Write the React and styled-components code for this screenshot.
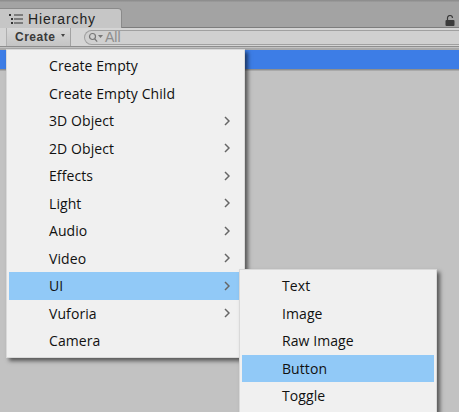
import styled, { createGlobalStyle } from "styled-components";

const GlobalStyle = createGlobalStyle`
  html, body {
    margin: 0;
    padding: 0;
    background: #c2c2c2;
  }
`;

const Window = styled.div`
  position: relative;
  width: 459px;
  height: 412px;
  overflow: hidden;
  background: #c2c2c2;
  font-family: "Open Sans", "Liberation Sans", sans-serif;
  display: flex;
  flex-direction: column;
`;

const TabStrip = styled.div`
  height: 28px;
  box-sizing: border-box;
  padding-top: 8px;
  background: linear-gradient(#8e8e8e 0, #8e8e8e 1px, #a3a3a3 2px);
  border-bottom: 1px solid #7d7d7d;
  display: flex;
  align-items: flex-end;
  justify-content: space-between;
`;

const Tab = styled.div`
  width: 122px;
  height: 20px;
  box-sizing: border-box;
  margin-bottom: -1px;
  padding-left: 9px;
  background: #c6c6c6;
  border: 1px solid #8a8a8a;
  border-left: 0;
  border-bottom: 0;
  border-radius: 0 4px 0 0;
  display: flex;
  align-items: center;
  gap: 4px;
  font-family: "Liberation Sans", Arial, sans-serif;
  font-size: 14px;
  letter-spacing: 0.9px;
  color: #222;
`;

const LockIcon = styled.svg`
  width: 10px;
  height: 11px;
  margin: 0 4px 1px 0;
  color: #3a3a3a;
`;

const Toolbar = styled.div`
  height: 19px;
  box-sizing: border-box;
  background: #d5d5d5;
  border-bottom: 1px solid #8e8e8e;
  display: flex;
  align-items: center;
  padding-left: 6px;
`;

const CreateButton = styled.div`
  width: 65px;
  height: 18px;
  box-sizing: border-box;
  padding-left: 8px;
  background: linear-gradient(#d8d8d8, #c4c4c4);
  border-left: 1px solid #b0b0b0;
  border-right: 1px solid #a2a2a2;
  display: flex;
  align-items: center;
  gap: 6px;
  font-family: "Liberation Sans", Arial, sans-serif;
  font-size: 12px;
  font-weight: 700;
  letter-spacing: 0.5px;
  color: #3a3a3a;
`;

const Caret = styled.span`
  width: 0;
  height: 0;
  border-left: 2.5px solid transparent;
  border-right: 2.5px solid transparent;
  border-top: 3px solid #444;
  margin-bottom: 3px;
`;

const SearchField = styled.div`
  flex: 1;
  height: 15px;
  margin-left: 13px;
  box-sizing: border-box;
  padding-left: 3px;
  background: #d0d0d0;
  border: 1px solid #a0a0a0;
  border-right: 0;
  border-radius: 8px 0 0 8px;
  display: flex;
  align-items: center;
  gap: 1px;
  font-family: "Liberation Sans", Arial, sans-serif;
  font-size: 14px;
  color: #8d8d8d;
`;

const TreeRow = styled.div`
  height: 19px;
  margin-top: 3px;
  background: #3d7de6;
  border-bottom: 1px solid #8f8f8f;
  box-shadow: 0 1px 0 #a9a9a9, 0 -2px 0 #a9a9a9;
`;

const Menu = styled.div`
  position: absolute;
  left: ${(p) => p.$left}px;
  top: ${(p) => p.$top}px;
  width: ${(p) => p.$width}px;
  box-sizing: border-box;
  padding: 2px;
  background: #f0f0f0;
  border: 1px solid #d9d9d9;
  box-shadow: 3px 3px 4px rgba(0, 0, 0, 0.55);
`;

const MenuItem = styled.div`
  height: 27.5px;
  display: flex;
  align-items: center;
  justify-content: space-between;
  box-sizing: border-box;
  padding: 0 12px 0 40px;
  background: ${(p) => (p.$active ? "#91c9f7" : "transparent")};
  font-size: 14px;
  letter-spacing: 0.08px;
  color: #111;
`;

const Chevron = styled.svg`
  width: 6px;
  height: 10px;
  fill: none;
  stroke: #666;
  stroke-width: 1.5;
`;

const mainItems = [
  { label: "Create Empty" },
  { label: "Create Empty Child" },
  { label: "3D Object", more: true },
  { label: "2D Object", more: true },
  { label: "Effects", more: true },
  { label: "Light", more: true },
  { label: "Audio", more: true },
  { label: "Video", more: true },
  { label: "UI", more: true, active: true },
  { label: "Vuforia", more: true },
  { label: "Camera" },
];

const subItems = [
  { label: "Text" },
  { label: "Image" },
  { label: "Raw Image" },
  { label: "Button", active: true },
  { label: "Toggle" },
];

const App = () => (
  <Window>
    <GlobalStyle />
    <TabStrip>
      <Tab>
        <svg width="15" height="10" viewBox="0 0 15 10" fill="#333">
          <rect x="0" y="0" width="2" height="2" />
          <rect x="5" y="0.5" width="9" height="1" />
          <rect x="2" y="4" width="2" height="2" />
          <rect x="5" y="4.5" width="9" height="1" />
          <rect x="2" y="8" width="2" height="2" />
          <rect x="5" y="8.5" width="9" height="1" />
        </svg>
        Hierarchy
      </Tab>
      <LockIcon viewBox="0 0 10 11">
        <path d="M2.5 5V3a2.5 2.5 0 0 1 5 0" fill="none" stroke="currentColor" strokeWidth="1.2" />
        <rect x="0.5" y="5" width="9" height="6" rx="1" fill="currentColor" />
      </LockIcon>
    </TabStrip>
    <Toolbar>
      <CreateButton>
        Create
        <Caret />
      </CreateButton>
      <SearchField>
        <svg width="16" height="11" viewBox="0 0 16 11" fill="none" stroke="#777" strokeWidth="1.2">
          <circle cx="4.5" cy="4.5" r="3" />
          <path d="M6.8 7l2.4 2.6" />
          <path d="M10 3h5l-2.5 3z" fill="#777" stroke="none" />
        </svg>
        All
      </SearchField>
    </Toolbar>
    <TreeRow />
    <Menu $left={6} $top={49} $width={239}>
      {mainItems.map((item) => (
        <MenuItem key={item.label} $active={item.active}>
          {item.label}
          {item.more && (
            <Chevron viewBox="0 0 6 10">
              <path d="M1 1l4 4-4 4" />
            </Chevron>
          )}
        </MenuItem>
      ))}
    </Menu>
    <Menu $left={239} $top={269} $width={198}>
      {subItems.map((item) => (
        <MenuItem key={item.label} $active={item.active}>
          {item.label}
        </MenuItem>
      ))}
    </Menu>
  </Window>
);

export default App;
